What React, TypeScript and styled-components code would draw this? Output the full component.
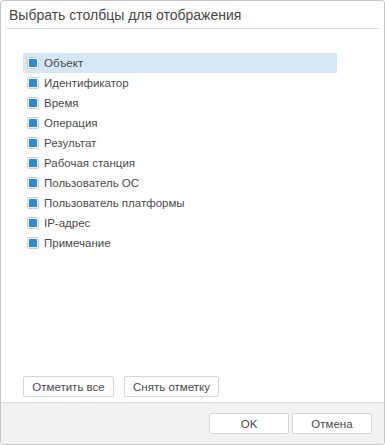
import styled, { createGlobalStyle } from "styled-components";

const GlobalStyle = createGlobalStyle`
  html, body {
    margin: 0;
    padding: 0;
    background: #ffffff;
  }
  body {
    font-family: "Liberation Sans", Arial, sans-serif;
  }
`;

const columns = [
  "Объект",
  "Идентификатор",
  "Время",
  "Операция",
  "Результат",
  "Рабочая станция",
  "Пользователь ОС",
  "Пользователь платформы",
  "IP-адрес",
  "Примечание",
];

const Dialog = styled.div`
  box-sizing: border-box;
  width: 385px;
  height: 445px;
  border: 1px solid #c6c6c6;
  border-radius: 3px;
  display: flex;
  flex-direction: column;
  background: #fff;
  overflow: hidden;
`;

const Header = styled.div`
  margin: 0 5px;
  height: 27px;
  border-bottom: 1px solid #dedede;
  display: flex;
  align-items: center;
  padding-left: 3px;
  font-size: 14px;
  color: #484848;
`;

const Body = styled.div`
  flex: 1;
  display: flex;
  flex-direction: column;
  padding: 24px 47px 0 22px;
`;

const List = styled.div`
  display: flex;
  flex-direction: column;
  flex: 1;
`;

const Row = styled.div<{ $selected?: boolean }>`
  height: 20px;
  display: flex;
  align-items: center;
  padding-left: 4px;
  gap: 5px;
  font-size: 11.5px;
  color: #4a4a4a;
  background: ${(p) => (p.$selected ? "#d5e6f5" : "transparent")};
`;

const Check = styled.span`
  box-sizing: border-box;
  width: 12px;
  height: 12px;
  border: 1px solid #cfcfcf;
  border-radius: 2px;
  background: #fff;
  display: flex;
  align-items: center;
  justify-content: center;
  &::after {
    content: "";
    width: 8px;
    height: 8px;
    background: #2a8ad4;
  }
`;

const BodyActions = styled.div`
  display: flex;
  gap: 10px;
  padding-bottom: 5px;
`;

const Button = styled.button<{ $width: number }>`
  box-sizing: border-box;
  width: ${(p) => p.$width}px;
  height: 21px;
  border: 1px solid #d6d6d6;
  border-radius: 2px;
  background: #fff;
  font-family: "Liberation Sans", Arial, sans-serif;
  font-size: 11.5px;
  color: #4a4a4a;
  padding: 0;
  cursor: pointer;
`;

const Footer = styled.div`
  height: 42px;
  box-sizing: border-box;
  border-top: 1px solid #dcdcdc;
  background: #f2f2f2;
  display: flex;
  justify-content: flex-end;
  align-items: center;
  gap: 3px;
  padding-right: 12px;
`;

export default function App() {
  return (
    <>
      <GlobalStyle />
      <Dialog>
        <Header>Выбрать столбцы для отображения</Header>
        <Body>
          <List>
            {columns.map((c, i) => (
              <Row key={c} $selected={i === 0}>
                <Check />
                {c}
              </Row>
            ))}
          </List>
          <BodyActions>
            <Button $width={91}>Отметить все</Button>
            <Button $width={95}>Снять отметку</Button>
          </BodyActions>
        </Body>
        <Footer>
          <Button $width={80}>OK</Button>
          <Button $width={80}>Отмена</Button>
        </Footer>
      </Dialog>
    </>
  );
}
